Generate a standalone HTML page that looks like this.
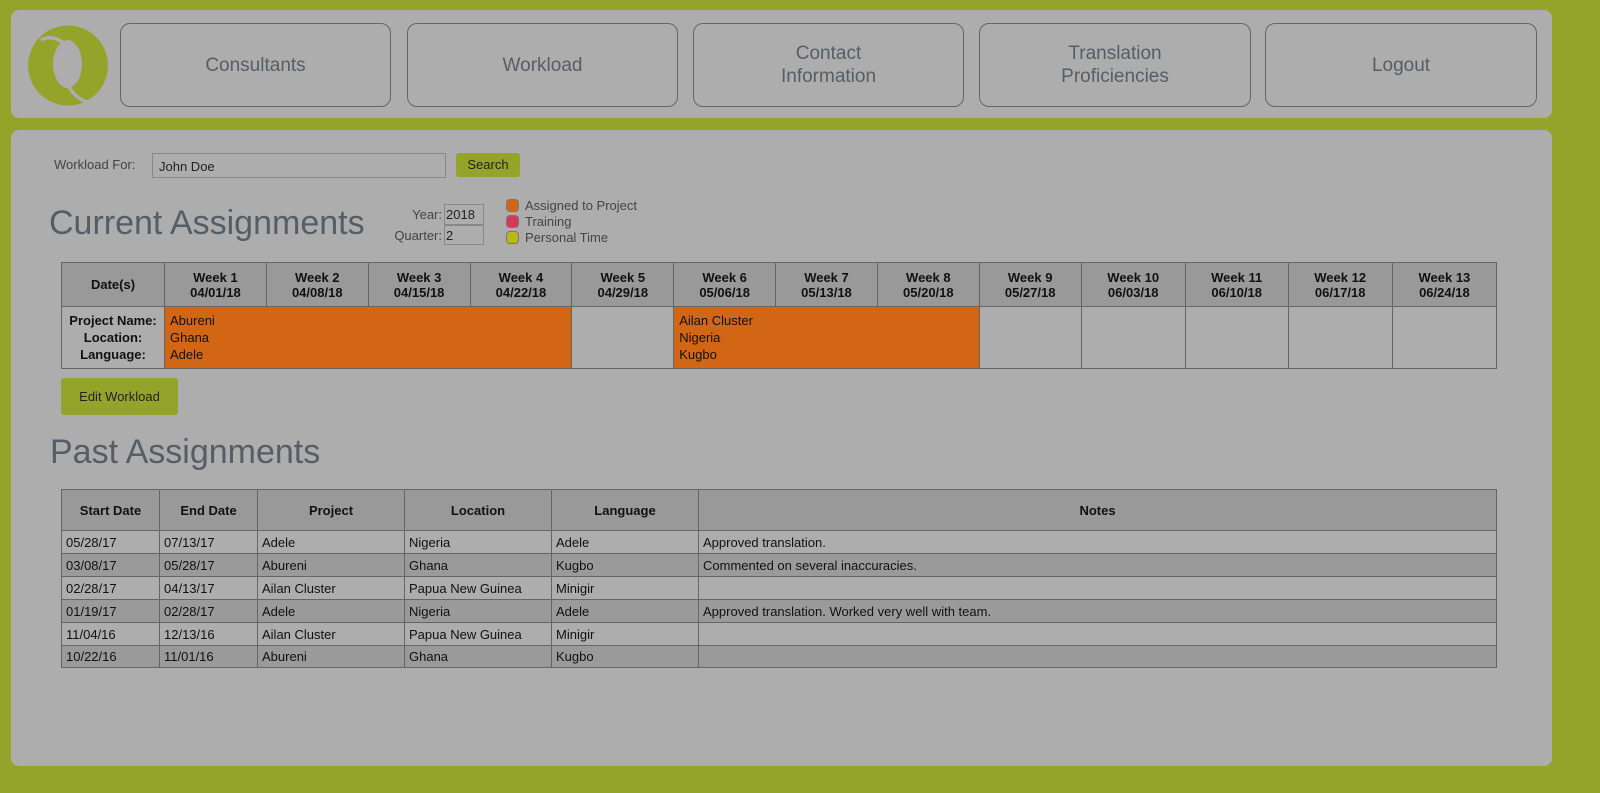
<!DOCTYPE html>
<html><head><style>
*{box-sizing:border-box;margin:0;padding:0}
body{width:1600px;height:793px;background:#94a42a;font-family:"Liberation Sans",sans-serif;position:relative;overflow:hidden}
.panel{position:absolute;background:#adadad;border-radius:8px}
.nav{position:absolute;top:23px;height:84px;border:1px solid #666;border-radius:10px;display:flex;align-items:center;justify-content:center;text-align:center;font-size:19px;color:#555e66;line-height:23px}
.abs{position:absolute}
table{border-collapse:collapse;position:absolute}
td,th{border:1px solid #666;font-size:13px;color:#111}
</style></head><body>
<div class="panel" style="left:11px;top:10px;width:1541px;height:108px"></div>
<svg class="abs" style="left:27px;top:25px" width="82" height="82" viewBox="0 0 82 82">
<path fill-rule="evenodd" fill="#94a42a" d="M1 40.5 A40 40 0 1 0 81 40.5 A40 40 0 1 0 1 40.5 Z M26 39 A14.5 24 0 1 0 55 39 A14.5 24 0 1 0 26 39 Z"/>
<path d="M14 15 Q26 9 38 19" stroke="#adadad" stroke-width="3.5" fill="none"/>
<path d="M42 62 Q52 78 68 78" stroke="#adadad" stroke-width="3.5" fill="none"/>
</svg>
<div class="nav" style="left:120px;width:271px">Consultants</div>
<div class="nav" style="left:407px;width:271px">Workload</div>
<div class="nav" style="left:693px;width:271px">Contact<br>Information</div>
<div class="nav" style="left:979px;width:272px">Translation<br>Proficiencies</div>
<div class="nav" style="left:1265px;width:272px">Logout</div>
<div class="panel" style="left:11px;top:130px;width:1541px;height:636px"></div>
<div class="abs" style="left:54px;top:157px;font-size:13px;color:#444">Workload For:</div>
<div class="abs" style="left:152px;top:153px;width:294px;height:25px;border:1px solid #888;font-size:13px;color:#222;padding:5px 6px">John Doe</div>
<div class="abs" style="left:456px;top:153px;width:64px;height:24px;background:#94a42a;border-radius:3px;font-size:13px;color:#222;text-align:center;line-height:24px">Search</div>
<div class="abs" style="left:49px;top:204px;font-size:34px;color:#555e66">Current Assignments</div>
<div class="abs" style="left:390px;top:207px;font-size:13px;color:#444;width:52px;text-align:right">Year:</div>
<div class="abs" style="left:390px;top:228px;font-size:13px;color:#444;width:52px;text-align:right">Quarter:</div>
<div class="abs" style="left:444px;top:204px;width:40px;height:21px;border:1px solid #888;font-size:13px;padding:2px 1px;color:#222">2018</div>
<div class="abs" style="left:444px;top:225px;width:40px;height:20px;border:1px solid #888;font-size:13px;padding:2px 1px;color:#222">2</div>
<div class="abs" style="left:506px;top:198px;font-size:13px;color:#444;line-height:16px">
<div><span style="display:inline-block;width:13px;height:13px;border-radius:4px;background:#d26614;vertical-align:-2px;margin-right:6px;border:1px solid #777"></span>Assigned to Project</div>
<div><span style="display:inline-block;width:13px;height:13px;border-radius:4px;background:#d4385a;vertical-align:-2px;margin-right:6px;border:1px solid #777"></span>Training</div>
<div><span style="display:inline-block;width:13px;height:13px;border-radius:4px;background:#b8b81a;vertical-align:-2px;margin-right:6px;border:1px solid #777"></span>Personal Time</div>
</div>
<table style="left:61px;top:262px;width:1436px">
<tr style="height:44px;background:#999">
<th style="width:103px">Date(s)</th>
<th>Week 1<br>04/01/18</th><th>Week 2<br>04/08/18</th><th>Week 3<br>04/15/18</th><th>Week 4<br>04/22/18</th><th>Week 5<br>04/29/18</th><th>Week 6<br>05/06/18</th><th>Week 7<br>05/13/18</th><th>Week 8<br>05/20/18</th><th>Week 9<br>05/27/18</th><th>Week 10<br>06/03/18</th><th>Week 11<br>06/10/18</th><th>Week 12<br>06/17/18</th><th>Week 13<br>06/24/18</th>
</tr>
<tr style="height:62px">
<th style="line-height:17px">Project Name:<br>Location:<br>Language:</th>
<td colspan="4" style="background:#d26614;padding-left:5px;line-height:17px">Abureni<br>Ghana<br>Adele</td>
<td></td>
<td colspan="3" style="background:#d26614;padding-left:5px;line-height:17px">Ailan Cluster<br>Nigeria<br>Kugbo</td>
<td></td><td></td><td></td><td></td><td></td>
</tr>
</table>
<div class="abs" style="left:61px;top:378px;width:117px;height:37px;background:#94a42a;border-radius:3px;font-size:13px;color:#222;text-align:center;line-height:37px">Edit Workload</div>
<div class="abs" style="left:50px;top:433px;font-size:34px;color:#555e66">Past Assignments</div>
<table style="left:61px;top:489px;width:1436px">
<tr style="height:41px;background:#999"><th style="width:98px">Start Date</th><th style="width:98px">End Date</th><th style="width:147px">Project</th><th style="width:147px">Location</th><th style="width:147px">Language</th><th>Notes</th></tr>
<tr style="height:23px"><td style="padding-left:4px">05/28/17</td><td style="padding-left:4px">07/13/17</td><td style="padding-left:4px">Adele</td><td style="padding-left:4px">Nigeria</td><td style="padding-left:4px">Adele</td><td style="padding-left:4px">Approved translation.</td></tr>
<tr style="height:23px;background:#9a9a9a"><td style="padding-left:4px">03/08/17</td><td style="padding-left:4px">05/28/17</td><td style="padding-left:4px">Abureni</td><td style="padding-left:4px">Ghana</td><td style="padding-left:4px">Kugbo</td><td style="padding-left:4px">Commented on several inaccuracies.</td></tr>
<tr style="height:23px"><td style="padding-left:4px">02/28/17</td><td style="padding-left:4px">04/13/17</td><td style="padding-left:4px">Ailan Cluster</td><td style="padding-left:4px">Papua New Guinea</td><td style="padding-left:4px">Minigir</td><td></td></tr>
<tr style="height:23px;background:#9a9a9a"><td style="padding-left:4px">01/19/17</td><td style="padding-left:4px">02/28/17</td><td style="padding-left:4px">Adele</td><td style="padding-left:4px">Nigeria</td><td style="padding-left:4px">Adele</td><td style="padding-left:4px">Approved translation. Worked very well with team.</td></tr>
<tr style="height:23px"><td style="padding-left:4px">11/04/16</td><td style="padding-left:4px">12/13/16</td><td style="padding-left:4px">Ailan Cluster</td><td style="padding-left:4px">Papua New Guinea</td><td style="padding-left:4px">Minigir</td><td></td></tr>
<tr style="height:22px;background:#9a9a9a"><td style="padding-left:4px">10/22/16</td><td style="padding-left:4px">11/01/16</td><td style="padding-left:4px">Abureni</td><td style="padding-left:4px">Ghana</td><td style="padding-left:4px">Kugbo</td><td></td></tr>
</table>
</body></html>
